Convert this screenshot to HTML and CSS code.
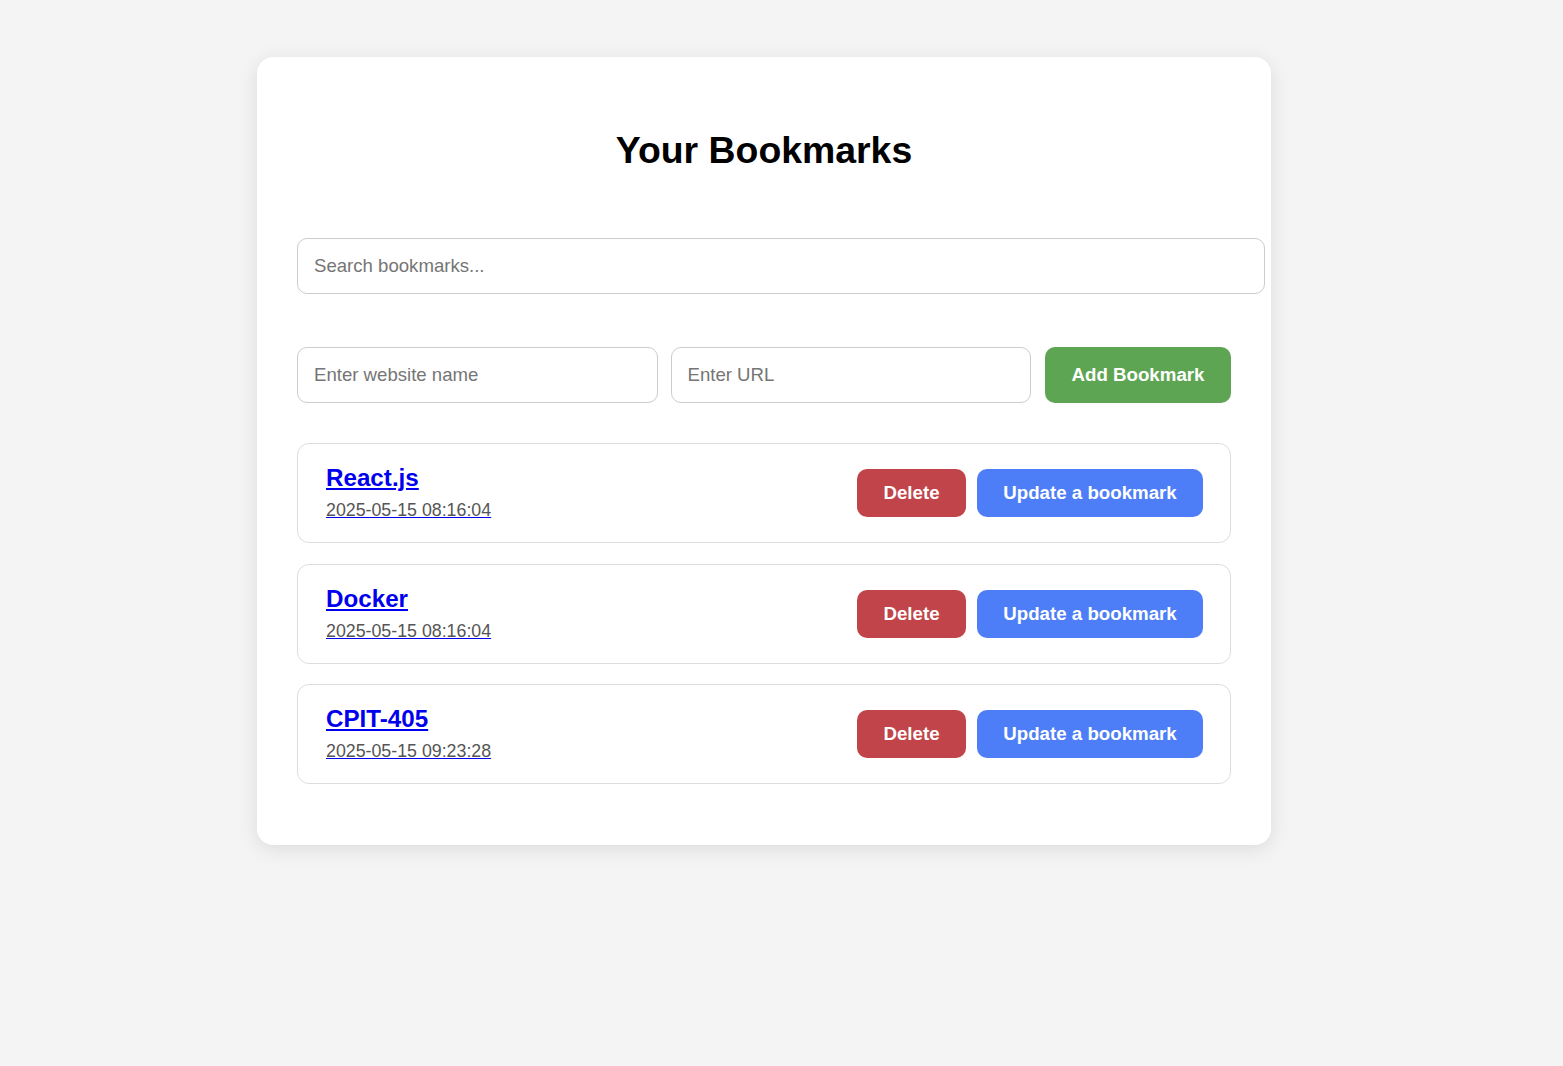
FILE: index.html
```html
<!DOCTYPE html>
<html lang="en">
<head>
<meta charset="utf-8">
<title>Your Bookmarks</title>
<link rel="stylesheet" href="styles.css">
</head>
<body>
  <main class="card">
    <h1 class="title">Your Bookmarks</h1>
    <input class="search" type="text" placeholder="Search bookmarks...">
    <div class="add-row">
      <input class="field" type="text" placeholder="Enter website name">
      <input class="field" type="text" placeholder="Enter URL">
      <button class="btn btn-add">Add Bookmark</button>
    </div>
    <ul class="list">
      <li class="item">
        <a class="link" href="#">
          <span class="name">React.js</span>
          <span class="date">2025-05-15 08:16:04</span>
        </a>
        <div class="actions">
          <button class="btn btn-delete">Delete</button>
          <button class="btn btn-update">Update a bookmark</button>
        </div>
      </li>
      <li class="item">
        <a class="link" href="#">
          <span class="name">Docker</span>
          <span class="date">2025-05-15 08:16:04</span>
        </a>
        <div class="actions">
          <button class="btn btn-delete">Delete</button>
          <button class="btn btn-update">Update a bookmark</button>
        </div>
      </li>
      <li class="item">
        <a class="link" href="#">
          <span class="name">CPIT-405</span>
          <span class="date">2025-05-15 09:23:28</span>
        </a>
        <div class="actions">
          <button class="btn btn-delete">Delete</button>
          <button class="btn btn-update">Update a bookmark</button>
        </div>
      </li>
    </ul>
  </main>
</body>
</html>
```

FILE: styles.css
```css
* {
  font-family: "Liberation Sans", Arial, sans-serif;
}

body {
  margin: 0;
  background: #f4f4f4;
  padding: 57px 0 80px 0;
}

.card {
  width: 934px;
  margin-left: 257px;
  padding: 40px 40px 61px 40px;
  background: #ffffff;
  border-radius: 16px;
  box-shadow: 0 4px 20px rgba(0, 0, 0, 0.1);
}

.title {
  margin: 32px 0 67px 0;
  font-size: 37.4px;
  font-weight: bold;
  text-align: center;
  color: #000;
  line-height: 42px;
}

.search {
  display: block;
  width: 100%;
  box-sizing: content-box;
  padding: 0 16px;
  height: 54px;
  border: 1px solid #ccc;
  border-radius: 10px;
  font-size: 18.6px;
  color: #333;
  outline: none;
  margin: 0 0 53px 0;
}

.add-row {
  display: flex;
  gap: 13px;
  margin-bottom: 40px;
}

.field {
  flex: 1 1 0;
  min-width: 0;
  box-sizing: border-box;
  height: 56px;
  padding: 0 16px;
  border: 1px solid #ccc;
  border-radius: 10px;
  font-size: 18.6px;
  outline: none;
}

.search::placeholder,
.field::placeholder {
  color: #757575;
}

.btn {
  border: none;
  border-radius: 10px;
  color: #fff;
  font-size: 18.7px;
  font-weight: bold;
  padding: 0 27px;
  cursor: pointer;
}

.btn-add {
  width: 186px;
  height: 56px;
  margin-left: 1px;
  background: #5da553;
  padding: 0;
}

.list {
  list-style: none;
  margin: 0;
  padding: 0;
  display: flex;
  flex-direction: column;
  gap: 20.5px;
}

.item {
  display: flex;
  justify-content: space-between;
  align-items: center;
  padding: 21px 27px 21px 28px;
  border: 1px solid #ddd;
  border-radius: 12px;
}

.link {
  display: block;
  margin: -1px 0 1px 0;
  color: #0000ee;
  text-decoration: underline;
}

.name {
  display: block;
  font-size: 24.2px;
  font-weight: bold;
  line-height: 28px;
}

.date {
  display: block;
  margin-top: 8px;
  font-size: 17.8px;
  line-height: 20px;
  color: #555;
}

.actions {
  display: flex;
  gap: 11px;
}

.btn-delete {
  height: 48px;
  width: 109px;
  padding: 0;
  background: #c1444a;
}

.btn-update {
  height: 48px;
  width: 226px;
  padding: 0;
  background: #4d7ef7;
}
```
